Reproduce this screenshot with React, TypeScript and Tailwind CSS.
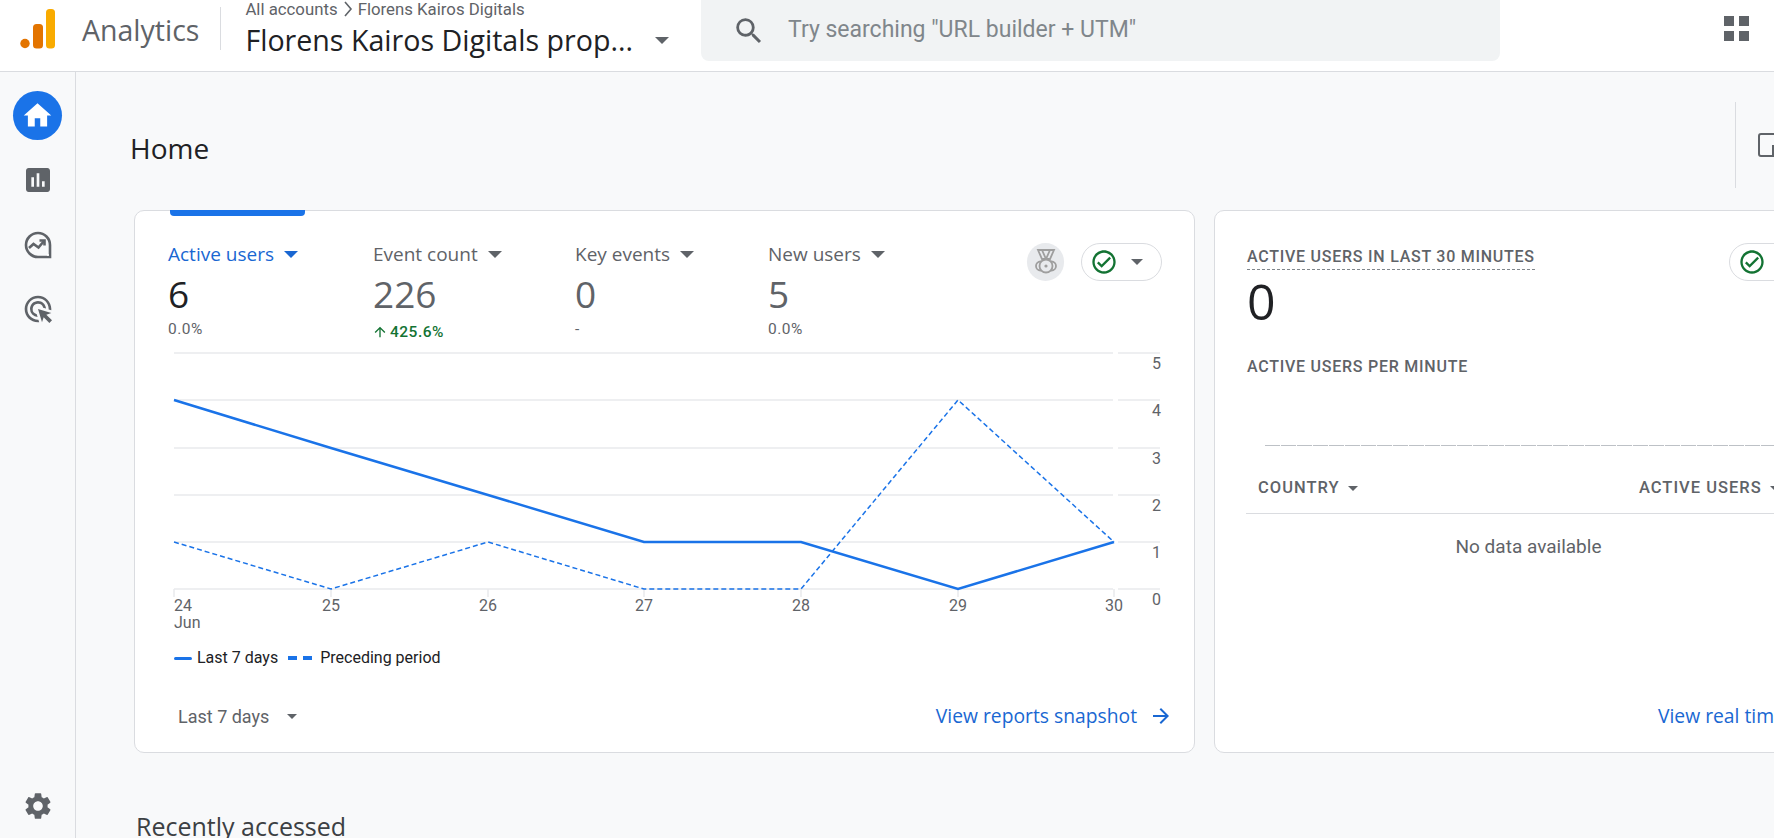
import React from 'react'
import { MdHome, MdAssessment, MdAdsClick, MdSettings, MdSearch, MdArrowForward, MdOutlineCheckCircle, MdArrowUpward } from 'react-icons/md'

const gsans = "font-['Open_Sans',sans-serif]"
const roboto = "font-['Roboto',sans-serif]"

const Caret = ({ className = '' }: { className?: string }) => (
  <svg viewBox="0 0 14 7" className={className} fill="currentColor">
    <path d="M0 0h14L7 7z" />
  </svg>
)

const Logo = () => (
  <svg width="35" height="40" viewBox="0 0 35 40" className="shrink-0">
    <circle cx="5" cy="34.5" r="4.7" fill="#e37400" />
    <rect x="13" y="15" width="10" height="24.5" rx="3.5" fill="#e37400" />
    <rect x="26" y="0" width="9" height="39.5" rx="3.5" fill="#f9ab00" />
  </svg>
)

const ExploreIcon = () => (
  <svg width="28" height="28" viewBox="0 0 28 28" fill="none" stroke="#5f6368" strokeWidth="2.6">
    <path d="M14 2a12 12 0 1 0 0 24h12v-12A12 12 0 0 0 14 2z" />
    <path d="M5 17l4.5-4 5 3.5L20 10" />
    <path d="M15.5 9.5H20.5V14.5" />
    <circle cx="24" cy="24" r="1" fill="#fff" stroke="none" />
  </svg>
)

const Medal = () => (
  <svg width="22" height="26" viewBox="0 0 22 26" fill="none" stroke="#9e9e9e" strokeWidth="1.8">
    <path d="M3 1h16l-4 9H7z" />
    <path d="M7 1l4 9 4-9" />
    <circle cx="5.5" cy="17" r="4.5" />
    <circle cx="16.5" cy="17" r="4.5" />
    <circle cx="11" cy="17" r="6.5" fill="#e8eaed" />
    <circle cx="11" cy="17" r="1.6" fill="#9e9e9e" stroke="none" />
  </svg>
)

const metrics = [
  { label: 'Active users', value: '6', delta: '0.0%', width: 'w-[205px]', active: true },
  { label: 'Event count', value: '226', delta: '425.6%', width: 'w-[202px]', up: true },
  { label: 'Key events', value: '0', delta: '-', width: 'w-[193px]' },
  { label: 'New users', value: '5', delta: '0.0%', width: 'w-[130px]' },
]

const xs = [174, 331, 488, 644, 801, 958, 1114]
const ys = [589, 542, 495, 448, 400, 353]
const pts = (vals: number[]) => vals.map((v, i) => `${xs[i]},${ys[v]}`).join(' ')

const Chart = () => (
  <svg width="1060" height="295" viewBox="135 345 1060 295" className="block shrink-0">
    {ys.map((y) => (
      <g key={y}>
        <line x1="174" x2="1113" y1={y} y2={y} stroke="#e8eaed" strokeWidth="1.5" />
        <line x1="1118" x2="1160" y1={y} y2={y} stroke="#e8eaed" strokeWidth="1.5" />
      </g>
    ))}
    {xs.map((x) => (
      <line key={x} x1={x} x2={x} y1="589" y2="597" stroke="#e8eaed" strokeWidth="1.5" />
    ))}
    <polyline points={pts([1, 0, 1, 0, 0, 4, 1])} fill="none" stroke="#1a73e8" strokeWidth="1.5" strokeDasharray="5 3" />
    <polyline points={pts([4, 3, 2, 1, 1, 0, 1])} fill="none" stroke="#1a73e8" strokeWidth="2.5" />
    <g fontFamily="Roboto, sans-serif" fontSize="16" fill="#5f6368">
      {['24', '25', '26', '27', '28', '29', '30'].map((d, i) => (
        <text key={d} x={xs[i]} y="611" textAnchor={i === 0 ? 'start' : 'middle'}>{d}</text>
      ))}
      <text x="174" y="628">Jun</text>
      {['0', '1', '2', '3', '4', '5'].map((d, i) => (
        <text key={d} x="1152" y={ys[i] + 16}>{d}</text>
      ))}
    </g>
  </svg>
)

const App = () => {
  return (
    <div className={`h-[838px] w-[1774px] overflow-hidden bg-[#f8f9fa] flex flex-col ${roboto}`}>
      {/* top bar */}
      <header className="h-[72px] shrink-0 bg-white border-b border-[#dadce0] flex items-start">
        <div className="w-[701px] shrink-0 flex items-start">
          <div className="ml-[20px] mt-[9px]"><Logo /></div>
          <div className={`ml-[27px] mt-[10px] text-[28.5px] leading-[40px] text-[#5f6368] ${gsans}`}>Analytics</div>
          <div className="ml-[21px] mt-[7px] w-px h-[43px] bg-[#dadce0]" />
          <div className="ml-[24px]">
            <div className="flex items-center text-[16.8px] leading-[18px] text-[#5f6368] whitespace-nowrap">
              All accounts
              <svg width="10" height="16" viewBox="0 0 10 16" className="mx-[5px]" fill="none" stroke="#5f6368" strokeWidth="1.6"><path d="M2 1l6 7-6 7" /></svg>
              Florens Kairos Digitals
            </div>
            <div className="flex items-center mt-[2px] whitespace-nowrap">
              <span className={`text-[28.6px] leading-[40px] text-[#202124] ${gsans}`}>Florens Kairos Digitals prop...</span>
              <Caret className="ml-[22px] w-[14px] h-[7px] text-[#5f6368]" />
            </div>
          </div>
        </div>
        <div className="w-[799px] h-[61px] bg-[#f1f3f4] rounded-b-lg flex items-center">
          <MdSearch className="ml-[31px] text-[#5f6368]" size={34} />
          <span className="ml-[22px] text-[23px] text-[#80868b]">Try searching "URL builder + UTM"</span>
        </div>
        <div className="ml-[224px] mt-[16px] grid grid-cols-2 gap-[5px]">
          <div className="w-[10px] h-[10px] bg-[#5f6368]" />
          <div className="w-[10px] h-[10px] bg-[#5f6368]" />
          <div className="w-[10px] h-[10px] bg-[#5f6368]" />
          <div className="w-[10px] h-[10px] bg-[#5f6368]" />
        </div>
      </header>

      <div className="flex flex-1 min-h-0">
        {/* left rail */}
        <nav className="w-[76px] shrink-0 border-r border-[#dadce0] flex flex-col items-center pt-[11px] pb-[8px]">
          <div className="h-[64px] flex items-center">
            <div className="w-[49px] h-[49px] rounded-full bg-[#1a73e8] flex items-center justify-center">
              <MdHome className="text-white" size={33} />
            </div>
          </div>
          <div className="h-[65px] flex items-center"><MdAssessment className="text-[#5f6368]" size={32} /></div>
          <div className="h-[65px] flex items-center"><ExploreIcon /></div>
          <div className="h-[64px] flex items-center"><MdAdsClick className="text-[#5f6368]" size={32} /></div>
          <div className="mt-auto h-[49px] flex items-center"><MdSettings className="text-[#5f6368]" size={32} /></div>
        </nav>

        <main className="flex-1 min-w-0 overflow-hidden">
          <div className="h-[138px] flex items-start">
            <h1 className={`ml-[54px] mt-[56px] flex-1 text-[28px] leading-[40px] text-[#202124] ${gsans}`}>Home</h1>
            <div className="mt-[30px] w-[39px] h-[86px] border-l border-[#dadce0] pl-[22px] pt-[31px] overflow-hidden">
              <svg width="16" height="24" viewBox="0 0 16 24" fill="none" stroke="#5f6368" strokeWidth="2">
                <path d="M16 1H3a2 2 0 0 0-2 2v18a2 2 0 0 0 2 2h13" />
                <path d="M15 23V12" />
              </svg>
            </div>
          </div>

          <div className="flex gap-[19px] ml-[58px] w-[1680px]">
            {/* overview card */}
            <section className="relative w-[1061px] h-[543px] shrink-0 bg-white border border-[#dadce0] rounded-[10px] flex flex-col">
              <div className="absolute top-[-1px] left-[35px] w-[135px] h-[6px] bg-[#1a73e8] rounded-b-[4px]" />
              <div className="h-[134px] pl-[33px] pt-[31px] flex items-start">
                {metrics.map((m) => (
                  <div key={m.label} className={`${m.width} shrink-0`}>
                    <div className={`flex items-center whitespace-nowrap text-[19px] leading-[24px] ${gsans} ${m.active ? 'text-[#1967d2]' : 'text-[#5f6368]'}`}>
                      {m.label}
                      <Caret className="ml-[10px] w-[14px] h-[7px]" />
                    </div>
                    <div className={`mt-[8px] text-[37px] leading-[40px] ${gsans} ${m.active ? 'text-[#202124]' : 'text-[#5f6368]'}`}>{m.value}</div>
                    <div className={`flex items-center text-[15.5px] leading-[20px] tracking-[0.5px] ${m.up ? 'mt-[8px] text-[#137333] font-medium' : 'mt-[5px] text-[#5f6368]'}`}>
                      {m.up && <MdArrowUpward size={16} className="-ml-[1px] mr-[2px]" />}
                      {m.delta}
                    </div>
                  </div>
                ))}
                <div className="ml-[129px] mt-[1px] w-[37px] h-[38px] rounded-full bg-[#e8eaed] flex items-center justify-center"><Medal /></div>
                <div className="ml-[17px] mt-[1px] w-[81px] h-[38px] rounded-full border border-[#dadce0] flex items-center">
                  <MdOutlineCheckCircle className="ml-[8px] text-[#137333]" size={28} />
                  <Caret className="ml-[13px] w-[12px] h-[6px] text-[#5f6368]" />
                </div>
              </div>
              <Chart />
              <div className="ml-[39px] h-[24px] mt-[6px] flex items-center text-[16px] text-[#202124]">
                <div className="w-[18px] h-[3px] bg-[#1a73e8] rounded-full" />
                <span className="ml-[5px]">Last 7 days</span>
                <div className="ml-[10px] w-[9px] h-[4px] bg-[#1a73e8]" />
                <div className="ml-[6px] w-[9px] h-[4px] bg-[#1a73e8]" />
                <span className="ml-[8px]">Preceding period</span>
              </div>
              <div className="mt-auto mb-[16px] h-[40px] flex items-center justify-between pl-[43px] pr-[21px]">
                <div className="flex items-center text-[18px] text-[#5f6368]">
                  Last 7 days
                  <Caret className="ml-[18px] w-[10px] h-[5px]" />
                </div>
                <div className={`flex items-center text-[19.3px] text-[#1967d2] ${gsans}`}>
                  View reports snapshot
                  <MdArrowForward size={24} className="ml-[12px]" />
                </div>
              </div>
            </section>

            {/* realtime card */}
            <section className="w-[600px] h-[543px] shrink-0 bg-white border border-[#dadce0] rounded-[10px] flex flex-col pl-[32px]">
              <div className="flex pt-[32px]">
                <div className="w-[482px] shrink-0">
                  <div className="mt-[4px] inline-block text-[16px] leading-[20px] font-medium tracking-[0.75px] text-[#5f6368] border-b-[1.5px] border-dashed border-[#80868b] pb-[2px]">ACTIVE USERS IN LAST 30 MINUTES</div>
                  <div className={`mt-[6px] text-[50px] leading-[50px] text-[#202124] ${gsans}`}>0</div>
                </div>
                <div className="w-[81px] h-[38px] rounded-full border border-[#dadce0] flex items-center">
                  <MdOutlineCheckCircle className="ml-[8px] text-[#137333]" size={28} />
                </div>
              </div>
              <div className="mt-[31px] text-[16px] leading-[20px] font-medium tracking-[0.75px] text-[#5f6368]">ACTIVE USERS PER MINUTE</div>
              <div className="mt-[68px] ml-[18px] h-px bg-[repeating-linear-gradient(90deg,#bdc1c6_0_15px,#ffffff_15px_16px)]" />
              <div className="-ml-[1px] h-[68px] border-b border-[#dadce0] pt-[18px] flex items-center text-[16.5px] font-medium tracking-[1px] text-[#5f6368]">
                <div className="w-[393px] pl-[12px] flex items-center shrink-0">COUNTRY<Caret className="ml-[8px] w-[10px] h-[5px]" /></div>
                <div className="flex items-center whitespace-nowrap">ACTIVE USERS<Caret className="ml-[8px] w-[10px] h-[5px]" /></div>
              </div>
              <div className="-ml-[1px] w-[565px] mt-[20px] text-center text-[19px] leading-[26px] text-[#5f6368]">No data available</div>
              <div className={`mt-auto mb-[16px] h-[40px] ml-[411px] flex items-center text-[19.3px] text-[#1967d2] whitespace-nowrap ${gsans}`}>View real time</div>
            </section>
          </div>

          <h2 className={`ml-[60px] mt-[58px] text-[25px] leading-[30px] text-[#3c4043] whitespace-nowrap ${gsans}`}>Recently accessed</h2>
        </main>
      </div>
    </div>
  )
}

export default App
